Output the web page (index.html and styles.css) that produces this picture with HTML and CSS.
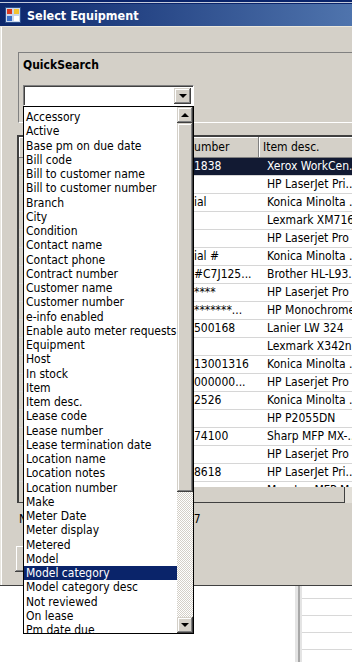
FILE: index.html
```html
<!DOCTYPE html>
<html lang="en">
<head>
    <meta charset="UTF-8">
    <meta name="viewport" content="width=device-width, initial-scale=1.0">
    <title>Select Equipment</title>
    <link rel="stylesheet" href="styles.css">
</head>
<body>
<div class="screen">
    <div class="topstrip"></div>
    <div class="dialog">
        <div class="titlebar">
            <svg class="app-icon" width="16" height="16" viewBox="0 0 16 16">
                <rect x="0.5" y="0.5" width="15" height="15" fill="#c9d7ee" stroke="#2c4f8c"/>
                <rect x="2" y="2" width="5" height="5" fill="#d83a22"/>
                <rect x="9" y="2" width="5" height="5" fill="#f2c431"/>
                <rect x="2" y="9" width="5" height="5" fill="#3a6fc8"/>
                <rect x="9" y="9" width="5" height="5" fill="#ffffff"/>
            </svg>
            <span class="title">Select Equipment</span>
        </div>
        <div class="dialog-body">
            <div class="search-panel">
                <div class="search-title">QuickSearch</div>
                <div class="combo">
                    <div class="combo-field"></div>
                    <div class="combo-btn raised"><span class="arrow-down"></span></div>
                </div>
            </div>

            <div class="grid">
                <div class="grid-head">
                    <div class="c0 hcell"></div>
                    <div class="c1 hcell">Equipment #</div>
                    <div class="c2 hcell head-clip">Number</div>
                    <div class="c3 hcell">Item desc.</div>
                </div>
                <div class="grid-rows">
                    <div class="grid-row selected"><div class="c0"></div><div class="c1"></div><div class="c2">1838</div><div class="c3">Xerox WorkCen...</div></div>
                    <div class="grid-row"><div class="c0"></div><div class="c1"></div><div class="c2"></div><div class="c3">HP LaserJet Pri...</div></div>
                    <div class="grid-row"><div class="c0"></div><div class="c1"></div><div class="c2">ial</div><div class="c3">Konica Minolta ...</div></div>
                    <div class="grid-row"><div class="c0"></div><div class="c1"></div><div class="c2"></div><div class="c3">Lexmark XM716...</div></div>
                    <div class="grid-row"><div class="c0"></div><div class="c1"></div><div class="c2"></div><div class="c3">HP Laserjet Pro</div></div>
                    <div class="grid-row"><div class="c0"></div><div class="c1"></div><div class="c2">ial #</div><div class="c3">Konica Minolta ...</div></div>
                    <div class="grid-row"><div class="c0"></div><div class="c1"></div><div class="c2">#C7J125...</div><div class="c3">Brother HL-L93...</div></div>
                    <div class="grid-row"><div class="c0"></div><div class="c1"></div><div class="c2">****</div><div class="c3">HP Laserjet Pro</div></div>
                    <div class="grid-row"><div class="c0"></div><div class="c1"></div><div class="c2">*******...</div><div class="c3">HP Monochrome</div></div>
                    <div class="grid-row"><div class="c0"></div><div class="c1"></div><div class="c2">500168</div><div class="c3">Lanier LW 324</div></div>
                    <div class="grid-row"><div class="c0"></div><div class="c1"></div><div class="c2"></div><div class="c3">Lexmark X342n ...</div></div>
                    <div class="grid-row"><div class="c0"></div><div class="c1"></div><div class="c2">13001316</div><div class="c3">Konica Minolta ...</div></div>
                    <div class="grid-row"><div class="c0"></div><div class="c1"></div><div class="c2">000000...</div><div class="c3">HP Laserjet Pro</div></div>
                    <div class="grid-row"><div class="c0"></div><div class="c1"></div><div class="c2">2526</div><div class="c3">Konica Minolta ...</div></div>
                    <div class="grid-row"><div class="c0"></div><div class="c1"></div><div class="c2"></div><div class="c3">HP P2055DN</div></div>
                    <div class="grid-row"><div class="c0"></div><div class="c1"></div><div class="c2">74100</div><div class="c3">Sharp MFP MX-...</div></div>
                    <div class="grid-row"><div class="c0"></div><div class="c1"></div><div class="c2"></div><div class="c3">HP Laserjet Pro</div></div>
                    <div class="grid-row"><div class="c0"></div><div class="c1"></div><div class="c2">8618</div><div class="c3">HP LaserJet Pri...</div></div>
                    <div class="grid-row"><div class="c0"></div><div class="c1"></div><div class="c2"></div><div class="c3">Muratec MFP M...</div></div>
                </div>
                <div class="grid-foot"></div>
            </div>

            <div class="status"><span class="status-label">Number of items found:</span><span>27</span></div>

            <div class="buttons">
                <button class="btn raised">OK</button>
            </div>
        </div>
    </div>

    <div class="behind">
        <div class="behind-left"></div>
        <div class="behind-split"></div>
        <div class="behind-grid">
            <div class="behind-row"></div>
            <div class="behind-row"></div>
            <div class="behind-row"></div>
            <div class="behind-row"></div>
        </div>
    </div>

    <!-- open dropdown of the QuickSearch combo -->
    <div class="droplist">
        <ul class="items">
            <li>Accessory</li>
            <li>Active</li>
            <li>Base pm on due date</li>
            <li>Bill code</li>
            <li>Bill to customer name</li>
            <li>Bill to customer number</li>
            <li>Branch</li>
            <li>City</li>
            <li>Condition</li>
            <li>Contact name</li>
            <li>Contact phone</li>
            <li>Contract number</li>
            <li>Customer name</li>
            <li>Customer number</li>
            <li>e-info enabled</li>
            <li>Enable auto meter requests</li>
            <li>Equipment</li>
            <li>Host</li>
            <li>In stock</li>
            <li>Item</li>
            <li>Item desc.</li>
            <li>Lease code</li>
            <li>Lease number</li>
            <li>Lease termination date</li>
            <li>Location name</li>
            <li>Location notes</li>
            <li>Location number</li>
            <li>Make</li>
            <li>Meter Date</li>
            <li>Meter display</li>
            <li>Metered</li>
            <li>Model</li>
            <li class="selected">Model category</li>
            <li>Model category desc</li>
            <li>Not reviewed</li>
            <li>On lease</li>
            <li>Pm date due</li>
        </ul>
        <div class="vscroll">
            <div class="sbtn raised"><span class="arrow-up"></span></div>
            <div class="thumb raised"></div>
            <div class="track"></div>
            <div class="sbtn raised"><span class="arrow-down"></span></div>
        </div>
    </div>
</div>
</body>
</html>
```

FILE: styles.css
```css
* {
    box-sizing: border-box;
}

body {
    margin: 0;
    width: 352px;
    height: 662px;
    overflow: hidden;
    background: #fff;
    font-family: "DejaVu Sans Condensed", "DejaVu Sans", sans-serif;
    font-size: 12px;
    color: #000;
}

.screen {
    position: relative;
    width: 352px;
    height: 662px;
    overflow: hidden;
}

.topstrip {
    height: 4px;
    background: linear-gradient(to bottom, #0a246a 0 2px, #c3cadb 2px 3px, #0a246a 3px);
}

/* classic 3D raised look */
.raised {
    background: #d4d0c8;
    box-shadow: inset -1px -1px #404040, inset 1px 1px #d4d0c8, inset -2px -2px #808080, inset 2px 2px #fff;
}

.dialog {
    height: 582px;
    background: #d4d0c8;
    border-bottom: 1px solid #404040;
    box-shadow: inset 1px 0 #e8e6e0, inset 2px 0 #fff;
}

.titlebar {
    height: 23px;
    display: flex;
    align-items: center;
    gap: 6px;
    padding-left: 5px;
    background: linear-gradient(to right, #0b266b, #4f74ad);
    border-bottom: 1px solid #ebe7dc;
}

.title {
    color: #fff;
    font-weight: bold;
    font-size: 12.5px;
}

.dialog-body {
    height: 558px;
    padding-top: 25px;
    display: flex;
    flex-direction: column;
}

.search-panel {
    margin-left: 18px;
    width: 360px;
    height: 71px;
    border: 1px solid;
    border-color: #808080 #fff #fff #808080;
    padding: 5px 0 0 4px;
}

.search-title {
    font-weight: bold;
    line-height: 14px;
}

.combo {
    margin-top: 13px;
    width: 171px;
    height: 21px;
    display: flex;
    background: #fff;
    border: 1px solid;
    border-color: #808080 #fff #fff #808080;
    box-shadow: inset 1px 1px #404040;
    padding: 2px 2px 1px 2px;
}

.combo-field {
    flex: 1;
}

.combo-btn {
    width: 17px;
    height: 16px;
    display: flex;
    align-items: center;
    justify-content: center;
}

.arrow-down,
.arrow-up {
    width: 0;
    height: 0;
    border-left: 4px solid transparent;
    border-right: 4px solid transparent;
}

.arrow-down {
    border-top: 4px solid #000;
}

.arrow-up {
    border-bottom: 4px solid #000;
}

/* data grid behind the dropdown */
.grid {
    margin-top: 12px;
    margin-left: 17px;
    width: 400px;
    height: 368px;
    background: #e2dfd8;
    border-top: 2px solid #404040;
    border-left: 2px solid #404040;
}

.grid-head {
    display: flex;
    height: 21px;
    line-height: 20px;
    white-space: nowrap;
}

.hcell {
    background: #d4d0c8;
    box-shadow: inset -1px -1px #808080, inset 1px 1px #fff;
    overflow: hidden;
}

.c0 {
    width: 17px;
    flex: none;
}

.c1 {
    width: 156px;
    flex: none;
    padding-left: 3px;
}

.c2 {
    width: 67px;
    flex: none;
    padding-left: 2px;
    overflow: hidden;
}

.c3 {
    flex: 1;
    padding-left: 8px;
}

.grid-head .c3 {
    padding-left: 4px;
}

.head-clip {
    text-indent: -8px;
}

.grid-rows {
    height: 329px;
    overflow: hidden;
}

.grid-row {
    display: flex;
    height: 18px;
    line-height: 17px;
    white-space: nowrap;
    background: #fff;
    border-bottom: 1px solid #d6d6d6;
}

.grid-row .c0 {
    background: #d4d0c8;
    box-shadow: inset -1px 0 #808080;
}

.grid-row.selected .c1,
.grid-row.selected .c2,
.grid-row.selected .c3 {
    background: #121a33;
    color: #fff;
}

.grid-foot {
    width: 326px;
    height: 16px;
    background: #d4d0c8;
    border-right: 1px solid #404040;
    border-bottom: 1px solid #404040;
}

.status {
    margin-top: 8px;
    padding-left: 19px;
    line-height: 16px;
    height: 16px;
}

.status-label {
    display: inline-block;
    width: 168px;
}

.buttons {
    margin-top: 18px;
    padding-left: 15px;
}

.btn {
    width: 75px;
    height: 27px;
    border: none;
    font: inherit;
    color: #000;
}

/* window below the dialog */
.behind {
    display: flex;
    height: 76px;
    background: #fff;
}

.behind-left {
    width: 295px;
}

.behind-split {
    width: 7px;
    background: linear-gradient(to right, #e4e4e4 0 3px, #a8a8a8 3px 5px, #e4e4e4 5px);
}

.behind-grid {
    flex: 1;
    padding-top: 12px;
}

.behind-row {
    height: 17px;
    border-top: 1px solid #d8d8d8;
}

/* dropdown list */
.droplist {
    position: absolute;
    left: 23px;
    top: 106px;
    width: 171px;
    height: 528px;
    display: flex;
    background: #fff;
    border: 1px solid #000;
}

.items {
    list-style: none;
    margin: 0;
    padding: 3px 0 0 0;
    flex: 1;
    overflow: hidden;
    white-space: nowrap;
}

.items li {
    height: 14.25px;
    line-height: 14.25px;
    padding-left: 2px;
}

.items li.selected {
    background: #0a246a;
    color: #fff;
}

.vscroll {
    width: 16px;
    display: flex;
    flex-direction: column;
}

.sbtn {
    height: 16px;
    flex: none;
    display: flex;
    align-items: center;
    justify-content: center;
}

.thumb {
    height: 369px;
    flex: none;
}

.track {
    flex: 1;
    background-color: #fff;
    background-image: conic-gradient(#d4d0c8 25%, #fff 0 50%, #d4d0c8 0 75%, #fff 0);
    background-size: 2px 2px;
}
```
